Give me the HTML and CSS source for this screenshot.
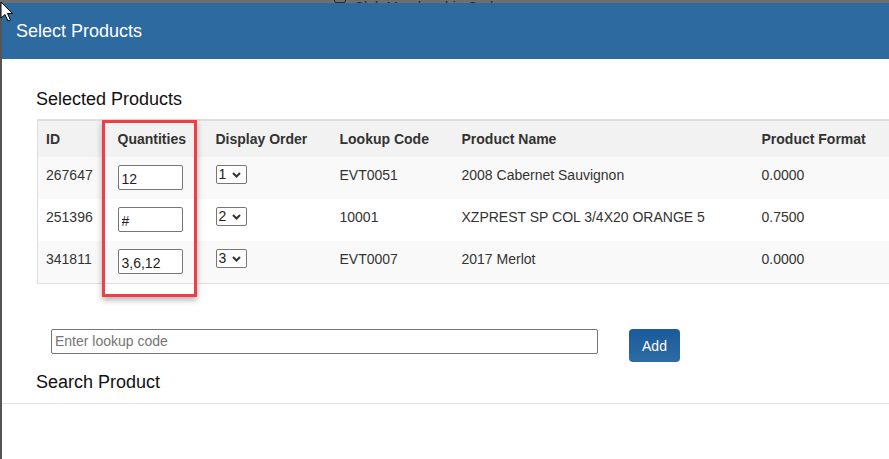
FILE: index.html
```html
<!DOCTYPE html>
<html lang="en">
<head>
    <meta charset="UTF-8">
    <title>Select Products</title>
    <link rel="stylesheet" href="styles.css">
</head>
<body>

<div class="backdrop-strip">
    <span class="bg-check"></span> Club Membership Codes
</div>

<div class="modal">
    <div class="modal-header">Select Products</div>

    <div class="modal-body">
        <h3 class="section-title">Selected Products</h3>

        <table class="product-table">
            <colgroup>
                <col style="width:72px">
                <col style="width:98px">
                <col style="width:124px">
                <col style="width:122px">
                <col style="width:300px">
                <col>
            </colgroup>
            <thead>
                <tr>
                    <th>ID</th>
                    <th>Quantities</th>
                    <th>Display Order</th>
                    <th>Lookup Code</th>
                    <th>Product Name</th>
                    <th>Product Format</th>
                </tr>
            </thead>
            <tbody>
                <tr>
                    <td>267647</td>
                    <td><input type="text" class="qty-input" value="12"></td>
                    <td>
                        <span class="select-wrap">
                            <select class="order-select"><option selected>1</option><option>2</option><option>3</option></select>
                            <svg class="chevron" width="9" height="6" viewBox="0 0 9 6"><path d="M1 1 L4.5 4.5 L8 1" fill="none" stroke="#333" stroke-width="2"/></svg>
                        </span>
                    </td>
                    <td>EVT0051</td>
                    <td>2008 Cabernet Sauvignon</td>
                    <td>0.0000</td>
                </tr>
                <tr>
                    <td>251396</td>
                    <td><input type="text" class="qty-input" value="#"></td>
                    <td>
                        <span class="select-wrap">
                            <select class="order-select"><option>1</option><option selected>2</option><option>3</option></select>
                            <svg class="chevron" width="9" height="6" viewBox="0 0 9 6"><path d="M1 1 L4.5 4.5 L8 1" fill="none" stroke="#333" stroke-width="2"/></svg>
                        </span>
                    </td>
                    <td>10001</td>
                    <td>XZPREST SP COL 3/4X20 ORANGE 5</td>
                    <td>0.7500</td>
                </tr>
                <tr>
                    <td>341811</td>
                    <td><input type="text" class="qty-input" value="3,6,12"></td>
                    <td>
                        <span class="select-wrap">
                            <select class="order-select"><option>1</option><option>2</option><option selected>3</option></select>
                            <svg class="chevron" width="9" height="6" viewBox="0 0 9 6"><path d="M1 1 L4.5 4.5 L8 1" fill="none" stroke="#333" stroke-width="2"/></svg>
                        </span>
                    </td>
                    <td>EVT0007</td>
                    <td>2017 Merlot</td>
                    <td>0.0000</td>
                </tr>
            </tbody>
        </table>

        <div class="lookup-row">
            <input type="text" class="lookup-input" placeholder="Enter lookup code">
            <button class="btn-add">Add</button>
        </div>

        <h3 class="section-title search-title">Search Product</h3>
    </div>
    <div class="divider"></div>
</div>

<!-- annotation box drawn over the Quantities column -->
<div class="highlight-box"></div>

<svg class="cursor" width="14" height="22" viewBox="0 0 14 22">
    <path d="M1 1 L1 17 L5 13.5 L8 20 L10.5 19 L7.5 12.5 L12.5 12.5 Z" fill="#fff" stroke="#000" stroke-width="1"/>
</svg>

</body>
</html>
```

FILE: styles.css
```css
body {
    margin: 0;
    font-family: "Liberation Sans", Arial, sans-serif;
    color: #333;
    background-color: #fff;
    overflow: hidden;
}
.backdrop-strip {
    height: 3px;
    overflow: hidden;
    background-color: #6f6f6f;
    color: #2a2a2a;
    font-size: 14px;
    line-height: 14px;
    padding-left: 334px;
}
.backdrop-strip .bg-check {
    display: inline-block;
    width: 10px;
    height: 10px;
    border: 1px solid #2a2a2a;
    border-radius: 2px;
    margin-top: -9px;
    margin-right: 4px;
    vertical-align: top;
}
.modal {
    border-left: 2px solid #555;
    overflow: hidden;
    height: 456px;
}
.modal-header {
    height: 56px;
    line-height: 56px;
    background-color: #2c6aa0;
    color: #fff;
    font-size: 18px;
    padding-left: 14px;
}
.modal-body {
    padding-left: 34px;
}
.section-title {
    margin: 30px 0 10px 0;
    font-size: 18px;
    font-weight: normal;
    line-height: 20px;
    color: #111;
}
.product-table {
    width: 880px;
    table-layout: fixed;
    border-collapse: collapse;
    margin-left: 1px;
    border-top: 2px solid #dedede;
    border-bottom: 1px solid #dedede;
    border-left: 1px solid #dedede;
    font-size: 14px;
}
.product-table th, .product-table td {
    text-align: left;
    padding: 0 0 0 8px;
    white-space: nowrap;
}
.product-table th {
    height: 36px;
    background-color: #f2f2f2;
    font-weight: bold;
    color: #333;
}
.product-table td {
    height: 42px;
    box-sizing: border-box;
    padding-top: 8px;
    line-height: 20px;
    vertical-align: top;
}
.product-table tbody tr:nth-child(odd) {
    background-color: #f9f9f9;
}
.qty-input {
    display: block;
    width: 65px;
    height: 25px;
    box-sizing: border-box;
    border: 1px solid #767676;
    border-radius: 2px;
    padding: 3px 3px 0 3px;
    font-family: "Liberation Sans", Arial, sans-serif;
    font-size: 14px;
    color: #222;
}
.select-wrap {
    position: relative;
    display: inline-block;
    vertical-align: top;
}
.order-select {
    display: block;
    width: 31px;
    height: 19px;
    box-sizing: border-box;
    border: 1px solid #767676;
    border-radius: 2px;
    padding: 0 0 0 2px;
    font-family: "Liberation Sans", Arial, sans-serif;
    font-size: 14px;
    line-height: 17px;
    color: #222;
    background-color: #fff;
    appearance: none;
    -webkit-appearance: none;
}
.chevron {
    position: absolute;
    left: 16px;
    top: 7px;
    pointer-events: none;
}
.lookup-row {
    display: flex;
    align-items: flex-start;
    gap: 31px;
    margin-top: 45px;
    padding-left: 15px;
}
.lookup-input {
    width: 547px;
    height: 25px;
    box-sizing: border-box;
    border: 1px solid #767676;
    border-radius: 2px;
    padding: 0 3px;
    font-family: "Liberation Sans", Arial, sans-serif;
    font-size: 14px;
}
.lookup-input::placeholder {
    color: #757575;
}
.btn-add {
    width: 51px;
    height: 33px;
    border: none;
    border-radius: 4px;
    background: linear-gradient(#1b5a9b, #2d6ca3);
    color: #fff;
    font-family: "Liberation Sans", Arial, sans-serif;
    font-size: 14px;
    padding: 2px 0 0 0;
}
.search-title {
    margin-top: 10px;
    margin-bottom: 0;
}
.divider {
    height: 1px;
    background-color: #e3e3e3;
    margin-top: 11px;
}
.highlight-box {
    position: absolute;
    left: 102px;
    top: 120px;
    width: 89px;
    height: 171px;
    border: 3px solid #ef3f46;
    box-shadow: 0 3px 6px rgba(0, 0, 0, 0.3);
}
.cursor {
    position: absolute;
    left: 0;
    top: 1px;
}
```
